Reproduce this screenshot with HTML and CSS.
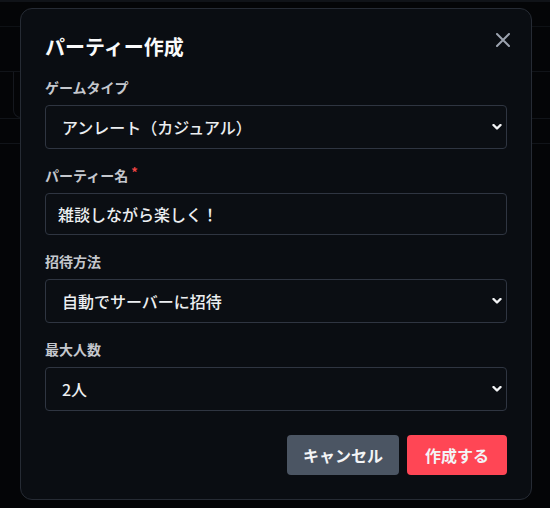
FILE: index.html
```html
<!DOCTYPE html>
<html lang="ja">
<head>
  <meta charset="UTF-8" />
  <meta name="viewport" content="width=device-width, initial-scale=1.0"/>
  <title>パーティー作成</title>
  <link rel="stylesheet" href="styles.css">
</head>
<body>
  <!-- Page behind the dialog -->
  <div class="page">
    <div class="topbar"></div>
    <div class="subbar"></div>
    <div class="row">
      <div class="card"></div>
    </div>
    <div class="row-line"></div>
  </div>

  <!-- Dimmed overlay + dialog -->
  <div class="overlay">
    <div class="modal">
      <button class="close-btn" aria-label="閉じる">
        <svg width="14" height="14" viewBox="0 0 14 14" fill="none" stroke="currentColor" stroke-width="2" stroke-linecap="round">
          <path d="M1 1 L13 13 M13 1 L1 13"/>
        </svg>
      </button>

      <h2 class="modal-title">パーティー作成</h2>

      <div class="field">
        <label>ゲームタイプ</label>
        <div class="select-wrap">
          <select>
            <option>アンレート（カジュアル）</option>
          </select>
          <svg class="chevron" width="10" height="6" viewBox="0 0 10 6" fill="none" stroke="currentColor" stroke-width="2.4" stroke-linecap="round" stroke-linejoin="round">
            <path d="M1.5 1 L5 4.5 L8.5 1"/>
          </svg>
        </div>
      </div>

      <div class="field">
        <label>パーティー名<span class="req">*</span></label>
        <input type="text" value="雑談しながら楽しく！">
      </div>

      <div class="field">
        <label>招待方法</label>
        <div class="select-wrap">
          <select>
            <option>自動でサーバーに招待</option>
          </select>
          <svg class="chevron" width="10" height="6" viewBox="0 0 10 6" fill="none" stroke="currentColor" stroke-width="2.4" stroke-linecap="round" stroke-linejoin="round">
            <path d="M1.5 1 L5 4.5 L8.5 1"/>
          </svg>
        </div>
      </div>

      <div class="field">
        <label>最大人数</label>
        <div class="select-wrap">
          <select>
            <option>2人</option>
          </select>
          <svg class="chevron" width="10" height="6" viewBox="0 0 10 6" fill="none" stroke="currentColor" stroke-width="2.4" stroke-linecap="round" stroke-linejoin="round">
            <path d="M1.5 1 L5 4.5 L8.5 1"/>
          </svg>
        </div>
      </div>

      <div class="actions">
        <button class="btn btn-cancel">キャンセル</button>
        <button class="btn btn-create">作成する</button>
      </div>
    </div>
  </div>
</body>
</html>
```

FILE: styles.css
```css
* {
  box-sizing: border-box;
}

body {
  margin: 0;
  background: #040507;
  font-family: "Noto Sans CJK JP", "Noto Sans", sans-serif;
  color: #e5e7eb;
  width: 550px;
  height: 508px;
  overflow: hidden;
  position: relative;
}

/* background page */
.page {
  height: 100%;
}

.topbar {
  height: 2px;
  background: #101318;
}

.subbar {
  height: 70px;
  border-bottom: 1px solid #111419;
  position: relative;
}

.subbar::before {
  content: "";
  position: absolute;
  left: 0;
  right: 0;
  top: 24px;
  border-top: 1px solid #0e1115;
}

.row {
  height: 47px;
  padding-left: 13px;
  border-bottom: 1px solid #111419;
}

.card {
  width: 60px;
  height: 46px;
  border: 1px solid #15181e;
  border-top: none;
  border-radius: 0 0 0 8px;
}

.row-line {
  height: 25px;
  border-bottom: 1px solid #111419;
}

/* overlay + dialog */
.overlay {
  position: absolute;
  inset: 0;
}

.modal {
  position: absolute;
  top: 8px;
  left: 20px;
  width: 512px;
  height: 492px;
  background: #0a0d12;
  border: 1px solid #262b34;
  border-radius: 12px;
  padding: 24px;
}

.close-btn {
  position: absolute;
  top: 20px;
  right: 17px;
  width: 22px;
  height: 22px;
  padding: 0;
  border: none;
  background: none;
  color: #9ca3af;
  display: flex;
  align-items: center;
  justify-content: center;
  cursor: pointer;
}

.modal-title {
  margin: 0 0 16px;
  font-size: 20px;
  line-height: 28px;
  font-weight: 700;
  color: #f9fafb;
}

.field {
  margin-bottom: 16px;
}

.field label {
  display: block;
  font-size: 14px;
  line-height: 20px;
  font-weight: 700;
  color: #c4c7cd;
  margin-bottom: 8px;
}

.req {
  color: #ef4444;
  font-size: 13px;
  margin-left: 3px;
  vertical-align: top;
  line-height: 14px;
}

.field select,
.field input {
  width: 100%;
  display: block;
  font-family: inherit;
  font-size: 16px;
  font-weight: 500;
  color: #eceef1;
  background: #0b0e13;
  border: 1px solid #2f3541;
  border-radius: 4px;
  outline: none;
}

.field input {
  height: 42px;
  padding: 0 12px;
}

.select-wrap {
  position: relative;
}

.field select {
  height: 44px;
  padding: 0 30px 0 16px;
  appearance: none;
  -webkit-appearance: none;
}

.chevron {
  position: absolute;
  right: 5px;
  top: 19px;
  color: #f3f4f6;
  pointer-events: none;
}

.actions {
  display: flex;
  justify-content: flex-end;
  gap: 8px;
  margin-top: 24px;
}

.btn {
  height: 40px;
  border: none;
  border-radius: 4px;
  font-family: inherit;
  font-size: 16px;
  font-weight: 700;
  color: #f3f4f6;
  cursor: pointer;
}

.btn-cancel {
  width: 112px;
  background: #4b5563;
}

.btn-create {
  width: 100px;
  background: #ff4655;
}
```
